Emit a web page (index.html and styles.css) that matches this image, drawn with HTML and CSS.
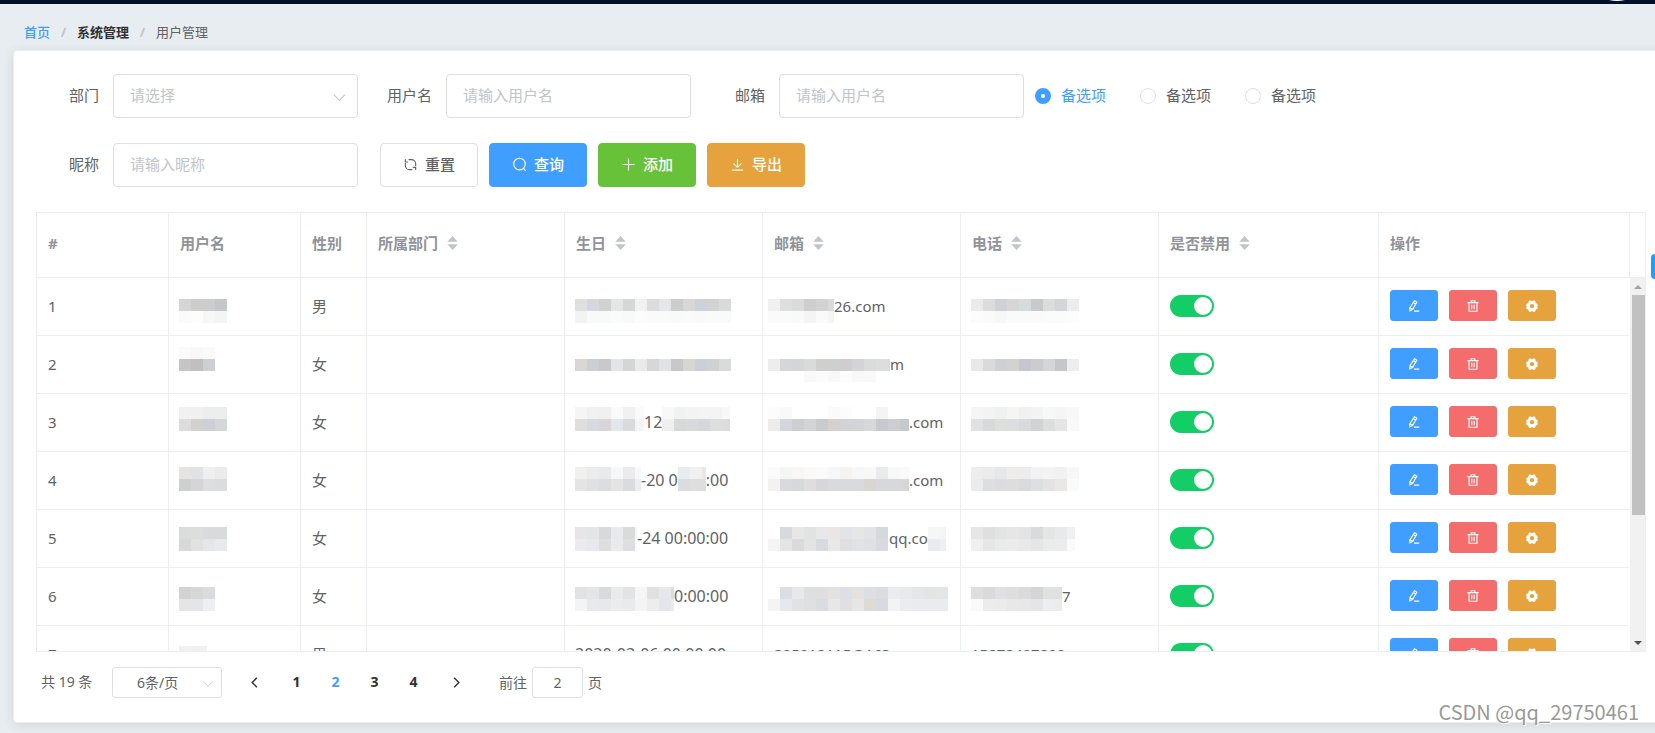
FILE: index.html
```html
<!DOCTYPE html>
<html lang="zh-CN">
<head>
<meta charset="utf-8">
<title>用户管理</title>
<link rel="stylesheet" href="styles.css">
</head>
<body>
<svg class="sprite" aria-hidden="true">
  <symbol id="i-down" viewBox="0 0 16 16"><path d="M2 5l6 6 6-6"/></symbol>
  <symbol id="i-left" viewBox="0 0 16 16"><path d="M10.500 3L5.500 8l5 5"/></symbol>
  <symbol id="i-right" viewBox="0 0 16 16"><path d="M5.500 3l5 5-5 5"/></symbol>
  <symbol id="i-refresh" viewBox="0 0 16 16"><path d="M6 2.800h3A4.500 4.500 0 0 1 13.500 7.300V9.500M10 13.500H7A4.500 4.500 0 0 1 2.500 9V6.500M2.500 2.300v3h3M13.500 13.800v-2.800h-3"/></symbol>
  <symbol id="i-search" viewBox="0 0 16 16"><circle cx="8" cy="7.500" r="6.200"/><path d="M12 12l2.600 2.800"/></symbol>
  <symbol id="i-plus" viewBox="0 0 16 16"><path d="M8 1.500v13M1.500 8h13"/></symbol>
  <symbol id="i-download" viewBox="0 0 16 16"><path d="M8 2v9M3.800 7l4.200 4 4.200-4M2 14h12"/></symbol>
  <symbol id="i-edit" viewBox="0 0 16 16"><path d="M8.600 1l3.200 1.800-5.500 9.700-3.700 2-.2-4z M7.200 3.600l3.200 1.800M2.400 10.500l3.900 2M8 14.800h7"/></symbol>
  <symbol id="i-delete" viewBox="0 0 16 16"><path d="M.5 3.500h15M2.700 3.500v11.500h10.600V3.500M5.500 3.500V1h5v2.500M6.400 6.300v6M9.600 6.300v6"/></symbol>
  <symbol id="i-setting" viewBox="0 0 16 16"><path fill-rule="evenodd" d="M4.300.6L6.500.5 8 2 9.500.5l2.200.1 1 1.600.1 2 2.200.8.9 2-1.200 1.500 1.200 1.500-.9 2-2.200.8-.1 1.600-1 1.400-2.200.1L8 14.300l-1.500 1.600-2.200-.1-1-1.400-.1-1.600L1 12l-.9-2 1.200-1.500L.1 7 1 5l2.200-.8.1-2zM8 5.200a2.900 2.900 0 1 0 0 5.800 2.900 2.900 0 0 0 0-5.800z"/></symbol>
  <symbol id="i-sort" viewBox="0 0 12 16"><path d="M6 0l6 6.500H0zM6 16l6-6.500H0z"/></symbol>
</svg>

<header class="topbar"><span class="avatar"></span></header>

<nav class="crumbs" aria-label="面包屑">
  <a class="home" href="#">首页</a><span class="sep">/</span>
  <a class="parent" href="#">系统管理</a><span class="sep">/</span>
  <span>用户管理</span>
</nav>

<main class="card">
  <form class="filters">
    <div class="field">
      <label for="dept">部门</label>
      <div class="select"><select id="dept" class="control"><option>请选择</option></select><svg class="icon"><use href="#i-down"/></svg></div>
    </div>
    <div class="field"><label for="user">用户名</label><input id="user" class="control" type="text" placeholder="请输入用户名"></div>
    <div class="field"><label for="mail">邮箱</label><input id="mail" class="control" type="text" placeholder="请输入用户名"></div>
    <div class="radios">
      <label><input type="radio" name="opt" checked><span>备选项</span></label>
      <label><input type="radio" name="opt"><span>备选项</span></label>
      <label><input type="radio" name="opt"><span>备选项</span></label>
    </div>
    <div class="field"><label for="nick">昵称</label><input id="nick" class="control" type="text" placeholder="请输入昵称"></div>
    <div class="actions">
      <button type="button" class="btn"><svg class="icon"><use href="#i-refresh"/></svg>重置</button>
      <button type="button" class="btn primary"><svg class="icon"><use href="#i-search"/></svg>查询</button>
      <button type="button" class="btn success"><svg class="icon"><use href="#i-plus"/></svg>添加</button>
      <button type="button" class="btn warning"><svg class="icon"><use href="#i-download"/></svg>导出</button>
    </div>
  </form>

  <section class="grid">
    <div class="grid-head">
      <table>
        <colgroup><col class="c-no"><col class="c-name"><col class="c-sex"><col class="c-wide"><col class="c-wide"><col class="c-wide"><col class="c-wide"><col class="c-switch"><col class="c-ops"></colgroup>
        <thead><tr>
          <th>#</th><th>用户名</th><th>性别</th>
          <th>所属部门<svg class="sort"><use href="#i-sort"/></svg></th>
          <th>生日<svg class="sort"><use href="#i-sort"/></svg></th>
          <th>邮箱<svg class="sort"><use href="#i-sort"/></svg></th>
          <th>电话<svg class="sort"><use href="#i-sort"/></svg></th>
          <th>是否禁用<svg class="sort"><use href="#i-sort"/></svg></th>
          <th>操作</th>
        </tr></thead>
      </table>
      <div class="gutter"></div>
    </div>
    <div class="grid-body">
      <table>
        <colgroup><col class="c-no"><col class="c-name"><col class="c-sex"><col class="c-wide"><col class="c-wide"><col class="c-wide"><col class="c-wide"><col class="c-switch"><col class="c-ops"></colgroup>
        <tbody id="rows"></tbody>
      </table>
      <div class="scrollbar" aria-hidden="true"><i class="up"></i><i class="thumb"></i><i class="down"></i></div>
    </div>
  </section>

  <div class="pager">
    <span class="total">共 19 条</span>
    <div class="select small"><select class="control" aria-label="每页条数"><option>6条/页</option></select><svg class="icon"><use href="#i-down"/></svg></div>
    <button type="button" class="step" aria-label="上一页"><svg class="icon"><use href="#i-left"/></svg></button>
    <div class="pages">
      <button type="button">1</button><button type="button" class="current">2</button><button type="button">3</button><button type="button">4</button>
    </div>
    <button type="button" class="step" aria-label="下一页"><svg class="icon"><use href="#i-right"/></svg></button>
    <label class="jump">前往<input class="control" type="text" value="2">页</label>
  </div>
</main>

<button type="button" class="drawer" aria-label="设置"></button>
<div class="watermark">CSDN @qq_29750461</div>
<script src="script.js"></script>
</body>
</html>
```
FILE: styles.css
```css
* { box-sizing: border-box; }

body {
  margin: 0;
  min-height: 100vh;
  position: relative;
  overflow: hidden;
  background: #e8edf1;
  color: #606266;
  font: 15px/20px "Noto Sans", "Noto Sans CJK SC", sans-serif;
}

button, input, select { font: inherit; color: inherit; margin: 0; }
button { cursor: pointer; }
a { text-decoration: none; }
.sprite { display: none; }
.icon { width: 15px; height: 15px; fill: none; stroke: currentColor; stroke-width: 1.200; flex: none; }

.topbar { position: relative; height: 4px; background: #001029; overflow: hidden; }
.avatar { position: absolute; right: 6px; bottom: 3px; width: 64px; height: 64px; border-radius: 50%; background: #fff; }

.crumbs { display: flex; padding: 18px 24px 8px; font-size: 13px; }
.crumbs .home { color: #409eff; font-weight: 500; }
.crumbs .parent { color: #303133; font-weight: 700; }
.crumbs .sep { width: 27px; text-align: center; color: #c0c4cc; font-weight: 700; }

.card {
  margin: 0 -14px 0 13px;
  padding: 23px 22px 24px;
  background: #fff;
  border: 1px solid #ebeef5;
  border-radius: 4px;
  box-shadow: 0 2px 12px rgba(0, 0, 0, .1);
}

.filters { display: grid; grid-template-columns: 20% 20% 20% 1fr; gap: 25px 11px; margin-bottom: 25px; }
.field { display: flex; align-items: center; }
.field > label { width: 77px; padding: 0 14px 2px 0; text-align: right; flex: none; }
.control {
  width: 100%;
  min-width: 0;
  height: 44px;
  padding: 0 16px 2px;
  border: 1px solid #dcdfe6;
  border-radius: 4px;
  background: #fff;
  appearance: none;
  outline: 0;
}
.field .control { flex: 1; }
.control::placeholder { color: #c0c4cc; opacity: 1; }
.select { position: relative; flex: 1; display: flex; color: #c0c4cc; }
.select .icon { position: absolute; right: 11px; top: 16px; pointer-events: none; }

.radios { display: flex; align-items: center; gap: 34px; }
.radios label { display: flex; align-items: center; gap: 10px; }
.radios span { padding-bottom: 2px; }
.radios input { appearance: none; width: 16px; height: 16px; border: 1px solid #dcdfe6; border-radius: 50%; background: #fff; }
.radios input:checked { border: 6px solid #409eff; }
.radios input:checked + span { color: #409eff; }

.actions { grid-column: 2 / -1; display: flex; gap: 11px; padding-left: 11px; }
.btn {
  display: flex;
  align-items: center;
  gap: 7px;
  height: 44px;
  padding: 0 22px 2px;
  border: 1px solid #dcdfe6;
  border-radius: 4px;
  background: #fff;
  font-weight: 500;
}
.btn.primary, .btn.success, .btn.warning, .btn.danger { color: #fff; }
.btn.primary { background: #409eff; border-color: #409eff; }
.btn.success { background: #67c23a; border-color: #67c23a; }
.btn.warning { background: #e6a23c; border-color: #e6a23c; }
.btn.danger { background: #f56c6c; border-color: #f56c6c; }

.grid { border: 1px solid #ebeef5; }
.grid-head, .grid-body { display: flex; }
.grid-head { height: 65px; border-bottom: 1px solid #ebeef5; }
.gutter { width: 16px; flex: none; }
.grid-body { height: 373px; overflow: hidden; }
table { flex: 1; width: 0; table-layout: fixed; border-collapse: separate; border-spacing: 0; align-self: flex-start; }
th, td { padding: 0 0 0 11px; border-right: 1px solid #ebeef5; text-align: left; white-space: nowrap; overflow: hidden; }
th { height: 64px; padding-bottom: 4px; color: #909399; font-weight: 700; }
td { height: 58px; padding-bottom: 2px; border-bottom: 1px solid #ebeef5; }
td:last-child { border-right-color: transparent; }
.c-no { width: 132px; }
.c-name { width: 132px; }
.c-sex { width: 66px; }
.c-wide { width: 198px; }
.c-switch { width: 220px; }
.c-ops { width: 251px; }
.sort { width: 11px; height: 14px; margin-left: 9px; fill: #c0c4cc; vertical-align: -1px; }

.masked { display: flex; align-items: center; height: 36px; }
.masked svg { height: 36px; flex: none; }
.date { font-size: 16px; padding-left: 10px; }
.mail.hidden-start { padding-left: 5px; }
.name, .tel { padding-left: 10px; }

.switch { appearance: none; display: block; width: 44px; height: 22px; border-radius: 11px; background: #13ce66; padding: 2px; }
.switch::before { content: ""; display: block; width: 18px; height: 18px; margin-left: auto; border-radius: 50%; background: #fff; }
.ops { display: flex; gap: 11px; }
.ops .btn { height: 31px; padding: 0 17px; border-radius: 3px; }
.ops .icon { width: 12px; height: 12px; stroke-width: 1.500; }
.ops .solid { fill: currentColor; stroke: none; }

.scrollbar { position: relative; width: 16px; flex: none; display: flex; flex-direction: column; align-items: center; background: #f1f1f1; }
.scrollbar .thumb { width: 13px; height: 220px; margin-top: 6px; background: #c1c1c1; }
.scrollbar .up { margin-top: 7px; border: 4px solid transparent; border-top: 0; border-bottom-color: #a3a3a3; }
.scrollbar .down { margin-top: auto; margin-bottom: 6px; border: 4px solid transparent; border-bottom: 0; border-top-color: #505050; }

.pager { display: flex; align-items: center; margin-top: 15px; padding-left: 5px; font-size: 14px; }
.pager .control { height: 31px; border-radius: 3px; }
.total { width: 71px; padding-bottom: 2px; }
.select.small { flex: none; width: 110px; margin-right: 13px; }
.select.small select { color: #606266; padding: 0 24px; }
.select.small .icon { width: 12px; height: 12px; right: 8px; top: 11px; }
.step { display: flex; justify-content: center; width: 38px; padding: 0; border: 0; background: none; color: #303133; }
.step .icon { stroke-width: 1.500; }
.pages { display: flex; padding: 0 4px; }
.pages button { width: 39px; padding: 0 0 2px; border: 0; background: none; color: #303133; font-weight: 700; }
.pages .current { color: #409eff; }
.jump { display: flex; align-items: center; gap: 5px; margin-left: 24px; }
.jump .control { width: 51px; padding: 0; text-align: center; }

.drawer { position: absolute; right: 0; top: 254px; width: 4px; height: 25px; padding: 0; border: 0; border-radius: 4px 0 0 4px; background: #1e9fff; }
.watermark {
  position: absolute;
  right: 16px;
  bottom: 7px;
  color: #999;
  font: 20px/28px "Noto Sans CJK SC", sans-serif;
  text-shadow: 1px 1px 0 #fff;
}
```
FILE: script.js
```js
// Masked values are drawn as 12px tiles: m(width, top, [row, row]) with one grey level per tile.
const TILE = 12;
function m(width, top, rows) {
  let tiles = '';
  rows.forEach((row, r) => row.split(' ').forEach((tone, c) => {
    const x = c * TILE;
    if (x >= width) return;
    tiles += `<rect x="${x}" y="${top + r * TILE}" width="${Math.min(TILE, width - x)}" height="${TILE}" fill="#${tone}"/>`;
  }));
  return `<svg width="${width}" viewBox="0 0 ${width} 36" shape-rendering="crispEdges" aria-hidden="true">${tiles}</svg>`;
}
const t = s => `<span>${s}</span>`;

const rows = [
  { sex: '男',
    name: m(48, 11, ['d5d5d5 cdcdcb cccdd0 c6c7c8', 'fbfbfb fdfdfb f7f7f8 f3f5f5']),
    date: m(156, 11, ['e0dfdf d4d8de d1d1d1 e2e6e5 d5d6d6 eff1f3 dcdcdd e4e6e7 cccccd d7d7d5 cdd1d9 d2d2d3 d9dbdb', 'f3f3f3 f8f9f9 f8f9f9 fafbfb f9f9f9 fbfcfb fafafa fafafa f8f9f9 f9faf9 f8f9f9 fafafa fafafa']),
    mail: m(66, 11, ['f0f0f0 dedede dadbda cecece d4d1d1 d8d9dc', 'fafafa fafafa f8f9f9 f4f4f4 fafafa f5f5f5']) + t('26.com'),
    tel: m(108, 11, ['ebebeb dbdcdc ced2d6 d6d6d4 d6dcdd c8c9cd dadddc d4d5d8 ebecee', 'fcfcfc fafafa f7f7f7 fafafa fafafa fafafa fbfbfb fbfbfb fcfcfc']) },
  { sex: '女',
    name: m(36, 1, ['fbfbfb f8f8f8 fafafa', 'c5c5c5 c0c0bf cdd0d3']),
    date: m(156, 13, ['dad6d3 cbcfd3 c9c9c9 e2e4e6 d4d5d5 e9eae9 d7d7d9 e0e2e5 c8c8c9 d6d6d3 cbcfd8 d1d1d1 d8dbda']),
    mail: m(122, 13, ['ededed d5d6d8 d4d5d6 d8dbda cfcfce d0cfcf d1cccf d3d4d6 dadbdb dcdddd dadada', 'ffffff ffffff ffffff f9f9f9 fbfbfb f8f8f8 fcfcfc f8f8f8 f9f9f9 ffffff ffffff']) + t('m'),
    tel: m(108, 13, ['e8e8e8 dadada ced0d2 d3d2d0 c4c7cf cecbce d4d5d6 c4c6cb ecedee']) },
  { sex: '女',
    name: m(48, 3, ['f1f1f1 f0f0f0 ebedee eceeee', 'dcdcdc d2d1cf cdd0d7 d5d6d8']),
    date: m(69, 3, ['f5f5f5 f1f1f1 f0f0f0 fafafa f1f1f2 fafafa', 'dfdedc d6d9df d8d6d8 e3e6ea d8dadb f5f5f5']) + t('12') + m(68, 3, ['f8f8f8 f0f1f1 f3f3f3 f4f4f4 f4f4f4 f8f8f8', 'efefef d7d9d8 d7d9db d4d8dc dcdedc dcdcdc']),
    mail: m(141, 3, ['fcfcfc f8f9f8 ffffff ffffff ffffff fcfaf8 fbfcfd ffffff ffffff f3f5f5 ffffff ffffff', 'eeecea d3d6dc cdcecf d3d4d6 c9cacc d4d0cb d1d3d5 d2d5d8 d6d8da c7c9cc ccced1 c6c9cb']) + t('.com'),
    tel: m(108, 3, ['f5f5f5 f3f3f3 eff1f0 f5f5f4 f1f1f1 f3f3f3 f6f8f8 f5f5f5 f8f8f8', 'e0e1e0 d7d9da dcdfdc dbdee0 d9d9dc d0d3d2 dcdddd e5e5e5 f9f9f9']) },
  { sex: '女',
    name: m(48, 5, ['e5e4e2 e1e2e5 efefef ebebec', 'cecfcf d5d5d7 dedede dbdcde']),
    date: m(66, 5, ['f1f0ef ebecee eaeaea f6f7f8 ebeaec f6f8f8', 'e5e4e4 dfe0e0 dcdde0 e4e4e4 d9dbdd ededf0']) + t('-20 0') + m(28, 5, ['e8ecef eff0ef e8e8e8', 'd9dde0 dedede dddede']) + t(':00'),
    mail: m(141, 5, ['fafafa f5f5f4 f9f7f6 fbf8f8 fafafa f6f7f8 f5f2ef f6f8f8 f8f8f8 e9ebed f8f8f8 fafafa', 'f3f2f1 d8dadc d6d9da dededf d7d7da d9dadc d7dbdb d8dade d9d5d1 d6d8dc d7d9d9 d6d7d8']) + t('.com'),
    tel: m(108, 5, ['ededed ebebeb e6e7e8 eeebea ececec f2f2f4 f3f3f4 f1f1f2 f7f7f7', 'eaebeb dedee0 dcdcde dddddd d8dadd dedfe1 e3e3e4 eae7e4 f8fafc']) },
  { sex: '女',
    name: m(48, 7, ['dadbdb dcdedd d9dadb d9dade', 'd8d8d9 e1e1e1 e5e6e8 e8e9ea']),
    date: m(62, 7, ['e7e6e6 e3e5e7 d7dadb e7eaed d9dada f5f5f5', 'ebebeb e8e9ec dededf eaeaea dedee0 fafafa']) + t('-24 00:00:00'),
    mail: m(121, 7, ['ffffff d8d9dc e7e7e8 e1e3e2 e8e8e9 e9e6e4 e2e4e7 e6e6e7 e2e3e4 d6d9db', 'f4f4f4 e4e5e5 dbd9db e4e3e3 d9dadf e8e8e9 e0dfdf e1e2e3 e0e1e2 d9dade']) + t('qq.co') + m(18, 7, ['f6f6f6 f5f5f6', 'e8eaec eeeff0']),
    tel: m(104, 7, ['e6e6e6 dfdfdf e3e3e3 e6e6e6 e3e3e3 d9dadb e4e6e6 e8e9ea f0f0f0', 'f0f0f0 e5e6e6 e9eaea ebebeb e8e9e9 e6e6e6 eaebeb ececec fafafc']) },
  { sex: '女',
    name: m(36, 9, ['d3d3d4 d7d7d7 d8dcdf', 'e6e5e5 e3e5e8 efefef']),
    date: m(99, 9, ['e3e2e2 e3e6e7 d9dada e9eaeb e3e3e3 f3f6f6 e4e0dd e5e7ea dcdcde', 'f3f4f4 e7e9ec e7e8e9 ececed e9eaec f4f4f4 ededee e5e6e9 e9eaed']) + t('0:00:00'),
    mail: m(180, 9, ['ffffff dadde4 e7e8e9 dedfe3 dfdfe0 e4e1df dcdfe5 e4e1df dedfe2 d9dce0 ebecf0 e7e9ec e5e6e8 e3e5e5 e4e5e7', 'f4f4f4 e6e9ea e2e1e3 dfe0e1 dadce1 e8e7e8 e0e0e2 e6e6e6 dedad6 d7dadf f3f3f4 ececee e9ebee e9ebee e9ebed']),
    tel: m(91, 9, ['dedede d9dadb e0e0e2 dedede dadada d4d5d6 dfe1e1 dfe0e2', 'fafafa ececec ebebeb e8e8e9 e7e7e7 e5e5e7 ededef ebebeb']) + t('7') },
  { sex: '男',
    name: m(28, 10, ['f0f0f1 efefef f1f1f1']),
    date: t('2020-03-06 00:00:00'), mail: t('205912115@163.com'), tel: t('15878407800'), plain: true }
];

const icon = (id, cls = '') => `<svg class="icon ${cls}"><use href="#i-${id}"/></svg>`;
document.getElementById('rows').innerHTML = rows.map((r, i) => `<tr>
  <td>${i + 1}</td>
  <td class="name"><div class="masked">${r.name}</div></td>
  <td>${r.sex}</td>
  <td></td>
  <td class="date"><div class="masked">${r.date}</div></td>
  <td class="mail ${r.plain ? '' : 'hidden-start'}"><div class="masked">${r.mail}</div></td>
  <td class="tel"><div class="masked">${r.tel}</div></td>
  <td><input type="checkbox" role="switch" class="switch" checked aria-label="是否禁用"></td>
  <td><div class="ops">
    <button type="button" class="btn primary" aria-label="编辑">${icon('edit')}</button>
    <button type="button" class="btn danger" aria-label="删除">${icon('delete')}</button>
    <button type="button" class="btn warning" aria-label="设置">${icon('setting', 'solid')}</button>
  </div></td>
</tr>`).join('');
```
